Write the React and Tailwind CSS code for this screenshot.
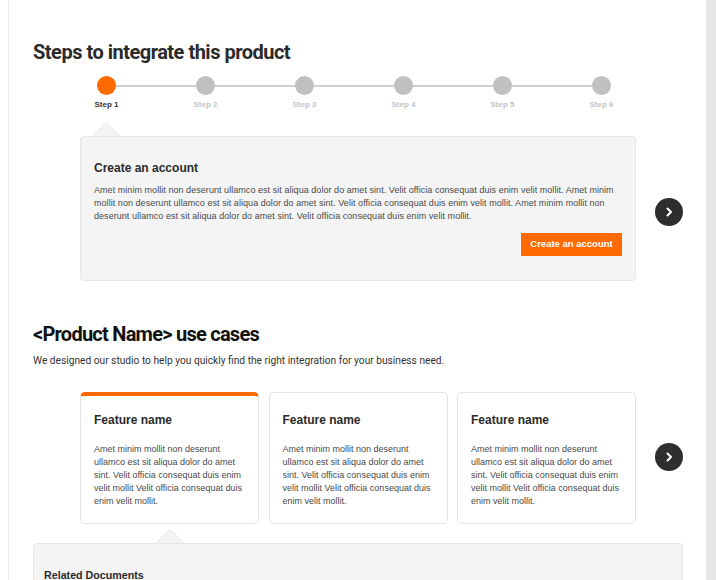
import React from "react";

function NextButton() {
  return (
    <button className="flex h-[28px] w-[28px] shrink-0 items-center justify-center rounded-full bg-[#2e2e2e]">
      <svg width="12" height="12" viewBox="0 0 12 12" fill="none">
        <path d="M4.5 2.5L8 6L4.5 9.5" stroke="white" strokeWidth="2" strokeLinecap="round" strokeLinejoin="round" />
      </svg>
    </button>
  );
}

function Pointer({ className }) {
  return (
    <svg width="30" height="15" viewBox="0 0 30 15" className={className}>
      <path d="M0 15.5 L15 0.5 L30 15.5" fill="#f4f4f4" stroke="#e6e6e6" strokeWidth="1" />
    </svg>
  );
}

const steps = ["Step 1", "Step 2", "Step 3", "Step 4", "Step 5", "Step 6"];

const featureLines = [
  "Amet minim mollit non deserunt",
  "ullamco est sit aliqua dolor do amet",
  "sint. Velit officia consequat duis enim",
  "velit mollit Velit officia consequat duis",
  "enim velit mollit.",
];

function FeatureCard({ active }) {
  return (
    <div
      className={
        "rounded-[5px] border border-[#e3e3e3] bg-white px-[13px] pb-[15px] " +
        (active ? "border-t-[4px] border-t-[#ff6a00] pt-[15px]" : "pt-[18px]")
      }
    >
      <div className="text-[12px] font-bold leading-[18px] text-[#2b2b2b]">Feature name</div>
      <div className="mt-[14px] text-[9px] leading-[13px] text-[#4a4a4a]">
        {featureLines.map((l, i) => (
          <div key={i} className="whitespace-nowrap">{l}</div>
        ))}
      </div>
    </div>
  );
}

export default function App() {
  return (
    <div
      className="flex h-[580px] w-[716px] overflow-hidden bg-[#e6e6e6]"
      style={{ fontFamily: "'Liberation Sans', Arial, sans-serif" }}
    >
      <div className="w-[8px] shrink-0 bg-white" />
      <div className="w-[699px] shrink-0 border-x border-[#ececec] bg-white pl-[24px] pt-[38px]">
        <h2
          className="text-[20px] font-bold leading-[28px] tracking-[-0.5px] text-[#2b2b2b]"
          style={{ fontFamily: "Roboto, sans-serif" }}
        >
          Steps to integrate this product
        </h2>

        {/* stepper */}
        <div className="relative ml-[24px] mt-[10px] flex w-[594px]">
          <div className="absolute left-[49.5px] right-[49.5px] top-[9px] h-[1.5px] bg-[#cfcfcf]" />
          {steps.map((s, i) => (
            <div key={s} className="relative flex w-[99px] flex-col items-center">
              <div
                className={"h-[19px] w-[19px] rounded-full " + (i === 0 ? "bg-[#ff6a00]" : "bg-[#c0c0c0]")}
              />
              <div
                className={
                  "mt-[4px] text-[8px] font-bold leading-[11px] " + (i === 0 ? "text-[#333]" : "text-[#c4c4c4]")
                }
              >
                {s}
              </div>
            </div>
          ))}
        </div>

        {/* step card */}
        <div className="ml-[47px] mt-[12px] flex items-center">
          <div className="flex w-[556px] flex-col">
            <Pointer className="-mb-px ml-[11px] block" />
            <div className="rounded-[4px] border border-[#e6e6e6] bg-[#f4f4f4] px-[13px] pb-[24px] pt-[22px]">
              <div className="text-[12px] font-bold leading-[18px] text-[#2b2b2b]">Create an account</div>
              <div className="mt-[7px] text-[9px] leading-[13px] tracking-[0.05px] text-[#4a4a4a]">
                <div className="whitespace-nowrap">
                  Amet minim mollit non deserunt ullamco est sit aliqua dolor do amet sint. Velit officia consequat duis enim velit mollit. Amet minim
                </div>
                <div className="whitespace-nowrap">
                  mollit non deserunt ullamco est sit aliqua dolor do amet sint. Velit officia consequat duis enim velit mollit. Amet minim mollit non
                </div>
                <div className="whitespace-nowrap">
                  deserunt ullamco est sit aliqua dolor do amet sint. Velit officia consequat duis enim velit mollit.
                </div>
              </div>
              <div className="mt-[10px] flex justify-end">
                <button className="h-[23px] w-[101px] bg-[#ff6a00] text-[9.5px] font-bold text-white">
                  Create an account
                </button>
              </div>
            </div>
          </div>
          <div className="ml-[19px] mt-[21px]">
            <NextButton />
          </div>
        </div>

        {/* use cases */}
        <h2
          className="mt-[39px] text-[20px] font-bold leading-[28px] tracking-[-0.75px] text-[#111]"
          style={{ fontFamily: "Roboto, sans-serif" }}
        >
          &lt;Product Name&gt; use cases
        </h2>
        <p className="mt-[6px] text-[10.2px] leading-[14px] text-[#333]" style={{ fontFamily: "Roboto, sans-serif" }}>
          We designed our studio to help you quickly find the right integration for your business need.
        </p>

        <div className="ml-[47px] mt-[24px] flex items-center">
          <div className="grid w-[556px] grid-cols-3 gap-[9.5px]">
            <FeatureCard active />
            <FeatureCard />
            <FeatureCard />
          </div>
          <div className="mb-[3px] ml-[19px]">
            <NextButton />
          </div>
        </div>

        {/* related documents */}
        <div className="mt-[5px] flex w-[650px] flex-col">
          <Pointer className="-mb-px ml-[122px] block" />
          <div className="h-[80px] rounded-[4px] border border-[#e6e6e6] bg-[#f4f4f4] pl-[10px] pt-[24px]">
            <div className="text-[10.7px] font-bold leading-[14px] text-[#2b2b2b]">Related Documents</div>
          </div>
        </div>
      </div>
    </div>
  );
}
